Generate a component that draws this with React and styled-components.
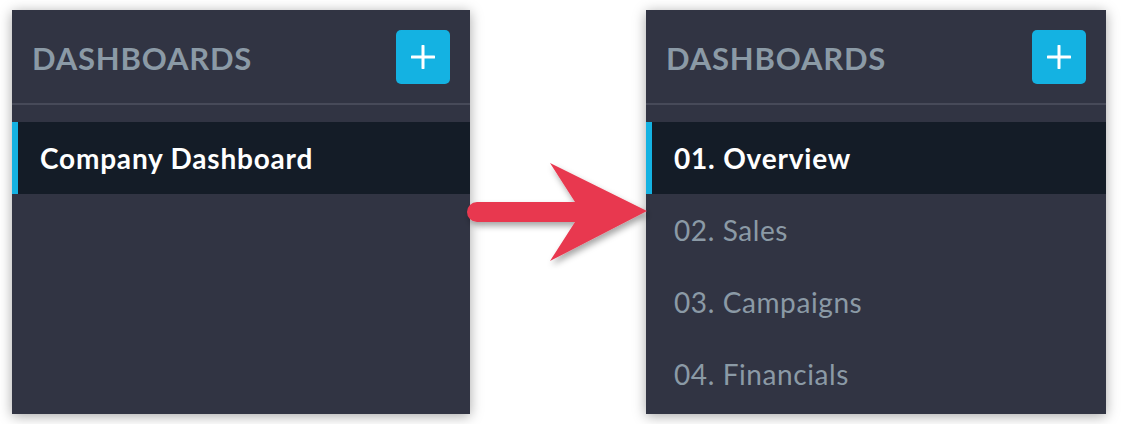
import styled, { createGlobalStyle } from "styled-components";

const GlobalStyle = createGlobalStyle`
    html, body {
        margin: 0;
        padding: 0;
        background: #ffffff;
    }
    body {
        font-family: Lato, "Noto Sans", sans-serif;
    }
`;

const beforeItems = [{ id: 1, label: "Company Dashboard" }];
const afterItems = [
    { id: 1, label: "01. Overview" },
    { id: 2, label: "02. Sales" },
    { id: 3, label: "03. Campaigns" },
    { id: 4, label: "04. Financials" },
];

function Panel({ items, activeId, width }) {
    return (
        <Sidebar $width={width}>
            <Header>
                <Title>DASHBOARDS</Title>
                <AddButton aria-label="Add dashboard">
                    <svg width="24" height="24" viewBox="0 0 24 24">
                        <path d="M12 1v22M1 12h22" stroke="#fff" strokeWidth="3" strokeLinecap="round" />
                    </svg>
                </AddButton>
            </Header>
            <List>
                {items.map(item => (
                    <Item key={item.id} $active={item.id === activeId}>
                        {item.label}
                    </Item>
                ))}
            </List>
        </Sidebar>
    );
}

export default function App() {
    return (
        <>
            <GlobalStyle />
            <Stage>
                <Panel items={beforeItems} activeId={1} width={458} />
                <Panel items={afterItems} activeId={1} width={460} />
                <Arrow width="200" height="110" viewBox="0 0 200 110">
                    <defs>
                        <filter id="arrowShadow" x="-10%" y="-20%" width="130%" height="150%">
                            <feDropShadow dx="2" dy="4" stdDeviation="3" floodColor="#000" floodOpacity="0.35" />
                        </filter>
                    </defs>
                    <path
                        d="M189 53 L92 5 L117 44 L19 44 A10 10 0 0 0 19 64 L117 64 L92 103 Z"
                        fill="#e8394f"
                        filter="url(#arrowShadow)"
                    />
                </Arrow>
            </Stage>
        </>
    );
}

const Stage = styled.div`
    position: relative;
    display: flex;
    gap: 176px;
    padding: 10px 0 0 12px;
    height: 424px;
    box-sizing: border-box;
`;

const Sidebar = styled.div`
    width: ${p => p.$width}px;
    height: 404px;
    background: #313443;
    box-shadow: 0 2px 12px rgba(0, 0, 0, 0.35);
    display: flex;
    flex-direction: column;
`;

const Header = styled.div`
    height: 95px;
    padding: 0 20px;
    display: flex;
    align-items: center;
    justify-content: space-between;
    border-bottom: 2px solid #474a59;
    box-sizing: border-box;
`;

const Title = styled.div`
    color: #8b9aa6;
    font-size: 31px;
    font-weight: 700;
    letter-spacing: 0.8px;
    margin-top: 2px;
`;

const AddButton = styled.button`
    width: 54px;
    height: 54px;
    border: none;
    border-radius: 5px;
    background: #14b2e2;
    display: flex;
    align-items: center;
    justify-content: center;
    padding: 0;
    cursor: pointer;
`;

const List = styled.div`
    padding-top: 17px;
    display: flex;
    flex-direction: column;
`;

const Item = styled.div`
    height: 72px;
    display: flex;
    align-items: center;
    padding-left: 22px;
    border-left: 6px solid ${p => (p.$active ? "#14b2e2" : "transparent")};
    background: ${p => (p.$active ? "#141c27" : "transparent")};
    color: ${p => (p.$active ? "#ffffff" : "#8b9aa6")};
    font-size: 28px;
    font-weight: ${p => (p.$active ? 700 : 400)};
    letter-spacing: ${p => (p.$active ? "0.8px" : "0.6px")};
`;

const Arrow = styled.svg`
    position: absolute;
    left: 458px;
    top: 158px;
    overflow: visible;
`;
